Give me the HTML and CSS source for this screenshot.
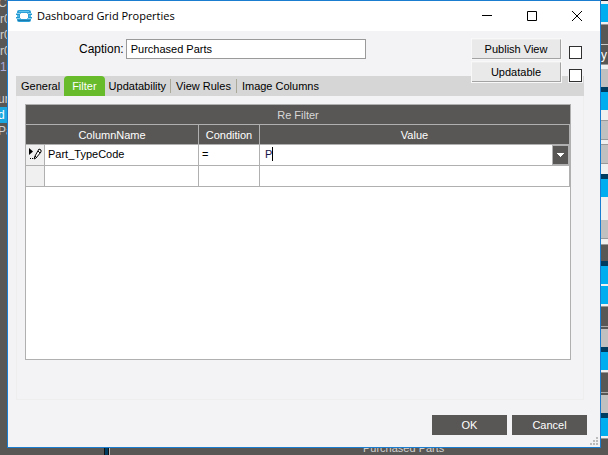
FILE: index.html
```html
<!DOCTYPE html>
<html lang="en">
<head>
<meta charset="utf-8">
<title>Dashboard Grid Properties</title>
<link rel="stylesheet" href="styles.css">
</head>
<body>
<div class="desktop">
  <ul class="tree">
    <li class="scrolled">Co</li><li>r0</li><li>r0</li><li>r0</li><li class="num">10</li><li></li><li class="scrolled">ure</li><li class="selected scrolled">d</li><li class="scrolled">Pa</li>
  </ul>
  <main class="dialog">
    <header class="titlebar">
      <svg class="logo" width="16" height="14" viewBox="0 0 16 14" aria-hidden="true">
        <rect x="1" y="1" width="14" height="12" rx="2" fill="#2a9fd8"/>
        <path d="M3 2.500h10" stroke="#5fc4ec"/>
        <path d="M0 4.500h4M12 4.500h4M0 9.500h4M12 9.500h4" stroke="#8fd0ec"/>
        <path d="M0 5h3v1H0zM13 5h3v1h-3zM0 8h3v1H0zM13 8h3v1h-3z" fill="#2398d0"/>
        <path d="M1 6h2v2H1zM13 6h2v2h-2z" fill="#4db5e2"/>
        <path d="M2 11.500h12" stroke="#1a7cae"/>
        <rect x="4" y="4" width="8" height="6" fill="#fff"/>
        <path d="M4 4h1v1H4zM11 4h1v1h-1zM4 9h1v1H4zM11 9h1v1h-1z" fill="#6cbfe4"/>
      </svg>
      <h1>Dashboard Grid Properties</h1>
      <div class="window-buttons">
        <button aria-label="Minimize"><svg width="12" height="12" viewBox="0 0 12 12"><path d="M1 5.500h10"/></svg></button>
        <button aria-label="Maximize"><svg width="12" height="12" viewBox="0 0 12 12"><path d="M1.500 1.500h9v9h-9z"/></svg></button>
        <button aria-label="Close"><svg width="12" height="12" viewBox="0 0 12 12"><path d="M1 1l10 10M11 1L1 11"/></svg></button>
      </div>
    </header>
    <div class="content">
      <div class="caption-row">
        <label for="caption">Caption:</label>
        <input id="caption" type="text" value="Purchased Parts">
      </div>
      <div class="options">
        <button>Publish View</button><input type="checkbox" aria-label="Publish View">
        <button>Updatable</button><input type="checkbox" aria-label="Updatable">
      </div>
      <section class="panel">
        <nav class="tabs">
          <button>General</button><button class="active">Filter</button><button>Updatability</button><button class="divided">View Rules</button><button class="divided">Image Columns</button>
        </nav>
        <div class="grid">
          <table>
            <caption>Re Filter</caption>
            <colgroup><col class="col-mark"><col class="col-name"><col class="col-condition"><col></colgroup>
            <thead><tr><th colspan="2">ColumnName</th><th>Condition</th><th>Value</th></tr></thead>
            <tbody>
              <tr>
                <td class="mark"><svg width="14" height="14" viewBox="0 0 14 14" aria-hidden="true"><path d="M1 1v7l4-3.500z"/><path d="M2 11h1v1H2zM4 11h1v1H4z"/><path d="M6 12l1-3 4-7 2 1v2l-5 6z" fill="#fff" stroke="#000"/><path d="M10 4l2 2M7 9l2 2" stroke="#000"/></svg></td>
                <td>Part_TypeCode</td>
                <td>=</td>
                <td class="value"><div class="combo"><span class="typed">P</span><button aria-label="Choose value"><svg width="7" height="4" viewBox="0 0 7 4"><path d="M0 0h7v1H6v1H5v1H4v1H3V3H2V2H1V1H0z" fill="#fff"/></svg></button></div></td>
              </tr>
              <tr><td class="mark"></td><td></td><td></td><td></td></tr>
            </tbody>
          </table>
        </div>
      </section>
      <footer class="actions"><button>OK</button><button>Cancel</button></footer>
      <svg class="grip" width="8" height="8" viewBox="0 0 8 8" aria-hidden="true"><path d="M6 0h2v2H6zM3 3h2v2H3zM6 3h2v2H6zM0 6h2v2H0zM3 6h2v2H3zM6 6h2v2H6z" fill="#bcbcbc"/></svg>
    </div>
  </main>
  <div class="backdrop"><span>y</span></div>
  <div class="status"><span>Purchased Parts</span></div>
</div>
</body>
</html>
```
FILE: styles.css
```css
* { box-sizing: border-box; }
body { margin: 0; font: 11px/14px "Liberation Sans", Arial, sans-serif; color: #000; background: #595755; }
button { font: inherit; color: inherit; border: 0; padding: 0; background: none; }
.desktop { display: grid; grid-template: minmax(0, 1fr) 7px / 7px minmax(0, 1fr) 7px; height: 100vh; overflow: hidden; }

.tree { margin: -5px 0 0; padding: 0; list-style: none; overflow: hidden; font-size: 12px; line-height: 16px; color: #d0d0d0; }
.tree li { height: 16px; }
.tree .scrolled { text-indent: -2px; }
.tree .num { color: #a9a9dc; }
.tree .selected { background: #1ba8e0; color: #fff; }

.dialog { display: flex; flex-direction: column; background: #f3f3f5; border: 1px solid #1a7dd0; }
.titlebar { display: flex; align-items: center; height: 30px; padding: 0 1px 0 8px; background: #fff; }
.titlebar h1 { margin: 0 0 0 5px; font: 11px/16px "Open Sans", "Noto Sans", sans-serif; }
.window-buttons { display: flex; margin-left: auto; }
.window-buttons button { width: 45px; height: 28px; }
.window-buttons svg { display: block; margin: auto; fill: none; stroke: #000; }

.content { position: relative; display: flex; flex: 1; flex-direction: column; padding: 8px 13px 12px 8px; }
.caption-row { display: flex; align-items: center; padding-left: 63px; gap: 2px; }
.caption-row label { font-size: 12px; }
.caption-row input { width: 240px; height: 20px; padding: 0 4px; border: 1px solid #9a9a9a; background: #fff; font: inherit; }
.options { position: absolute; top: 8px; right: 17px; display: grid; grid-template-columns: 89px 14px; column-gap: 8px; row-gap: 3px; align-items: end; }
.options button { height: 20px; background: #e9e9e9; border: solid; border-width: 1px 1px 1px 0; border-color: #eee #a3a3a3 #a3a3a3; outline: 1px solid #f8f8f8; }
.options input { appearance: none; width: 13px; height: 13px; margin: 0; border: 1px solid #303030; background: #fff; outline: 1px solid #f3f3f5; }

.panel { display: flex; flex: 1; flex-direction: column; margin: 17px 3px 15px 0; border: solid #eee; border-width: 0 1px 1px; }
.tabs { display: flex; height: 20px; margin: 0 -1px; padding-left: 1px; background: #d6d6d6; }
.tabs button { padding: 0 4px; }
.tabs .active { border-radius: 4px 4px 0 0; padding: 0 8px; background: #68bb2a; color: #fff; }
.tabs .divided { padding: 0 5px 0 6px; background: linear-gradient(#aaa99a, #aaa99a) left center / 1px 14px no-repeat; }

.grid { flex: 1; margin: 8px 12px 39px 8px; border: 1px solid #b0b0b0; background: #fff; }
table { width: 100%; table-layout: fixed; border-collapse: separate; border-spacing: 0; }
caption { height: 20px; line-height: 20px; background: #595755; color: #d8d8d8; border-bottom: 1px solid #b0b0b0; }
.col-mark { width: 19px; }
.col-name { width: 154px; }
.col-condition { width: 61px; }
th, td { padding: 0; border: solid #b0b0b0; border-width: 0 1px 1px 0; }
th { height: 20px; font-weight: normal; background: #595755; color: #fff; }
td { height: 21px; padding: 2px 0 0 3px; line-height: 14px; vertical-align: top; }
.mark { padding: 2px 0 0 2px; background: #f0f0f0; }
.mark svg { display: block; }
.value { padding: 0 0 0 5px; }
.combo { display: flex; align-items: flex-start; justify-content: space-between; height: 20px; }
.typed { margin-top: 2px; color: #17174a; border-right: 1px solid #000; }
.combo button { width: 17px; height: 20px; border: 1px solid #b0b0b0; background: #595755; }
.combo svg { display: block; margin: auto; }

.actions { display: flex; justify-content: flex-end; gap: 5px; }
.actions button { width: 75px; height: 20px; background: #595755; color: #fff; }
.grip { position: absolute; right: 2px; bottom: 2px; }

.backdrop {
  grid-row: 1 / 3; grid-column: 3; padding-top: 48px; overflow: hidden; color: #fff; font-size: 12px;
  background: linear-gradient(
    #123 0 1px, #f0f0f0 1px 4px, #00adef 4px 22px, #f0f0f0 22px 24px, #999 24px 25px, #595755 25px 44px, #ccc 44px 45px,
    #595755 45px 64px, #999 64px 65px, #f0f0f0 65px 69px, #c0c0c0 69px 87px, #003b60 87px 92px, #00adef 92px 110px,
    #f0f0f0 110px 120px, #999 120px 121px, #c0c0c0 121px 139px, #999 139px 140px, #f0f0f0 140px 144px, #999 144px 145px,
    #c0c0c0 145px 163px, #999 163px 164px, #f0f0f0 164px 174px, #003b60 174px 179px, #00adef 179px 197px,
    #f0f0f0 197px 220px, #c0c0c0 220px 238px, #999 238px 239px, #f0f0f0 239px 244px, #999 244px 245px, #595755 245px 261px,
    #003b60 261px 266px, #00adef 266px 284px, #f0f0f0 284px 286px, #00adef 286px 304px, #f0f0f0 304px 306px,
    #999 306px 307px, #595755 307px 326px, #aaa 326px 327px, #595755 327px 329px, #c0c0c0 329px 347px,
    #003b60 347px 352px, #00adef 352px 370px, #f0f0f0 370px 372px, #999 372px 373px, #595755 373px 392px,
    #aaa 392px 393px, #595755 393px 395px, #c0c0c0 395px 413px, #003b60 413px 418px, #00adef 418px 436px,
    #f0f0f0 436px 438px, #999 438px 439px, #595755 439px);
}
.status {
  grid-row: 2; grid-column: 1 / 3; display: flex; align-items: flex-end; padding-left: 363px; overflow: hidden; color: #d0d0d0;
  background: linear-gradient(90deg, #595755 0 104px, #111 104px 105px, #003b60 105px 108px, #111 108px 109px, #bbb 109px 110px, #595755 110px);
}
```
